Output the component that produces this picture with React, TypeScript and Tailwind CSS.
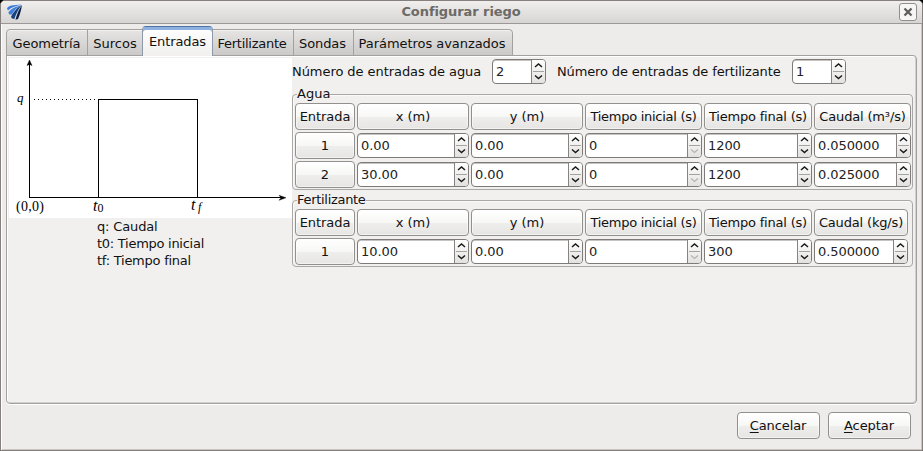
import React from "react";

function Spin({ value, className = "", downOff = false }: { value: string; className?: string; downOff?: boolean }) {
  return (
    <div className={`flex h-[25px] overflow-hidden rounded-[4px] border border-[#7d7a78] bg-white shadow-[inset_0_1px_0_#c6c4c2] ${className}`}>
      <div className="min-w-0 flex-1 pl-[3px] leading-[24px] tracking-[-0.08px] text-[#222]">{value}</div>
      <div className="h-full w-[14px] shrink-0 border-l border-[#868381] bg-gradient-to-b from-white to-[#e2e1df]">
        <svg width="13" height="23" viewBox="0 0 13 23" fill="none">
          <path d="M1 11.5H12" stroke="#a5a3a1" />
          <path d="M3 7L6.500 4L10 7" stroke="#1a1a1a" strokeWidth="1.5" />
          <path d="M3 15.500L6.500 18.500L10 15.500" stroke={downOff ? "#b5b3b1" : "#1a1a1a"} strokeWidth={downOff ? 1.2 : 1.5} />
        </svg>
      </div>
    </div>
  );
}

function Button({ children, className = "" }: { children: React.ReactNode; className?: string }) {
  return (
    <div className={`h-[27px] rounded-[4px] border border-[#91908c] bg-linear-[180deg,#ffffff,#f7f7f6_50%,#eeeeed_51%,#e6e5e4] text-center leading-[25px] whitespace-nowrap shadow-[inset_0_0_0_1px_#ffffff80] ${className}`}>
      {children}
    </div>
  );
}

const headings = [
  { label: "Entrada", tracking: "tracking-[-0.05px]" },
  { label: "x (m)", tracking: "" },
  { label: "y (m)", tracking: "" },
  { label: "Tiempo inicial (s)", tracking: "tracking-[-0.27px]" },
  { label: "Tiempo final (s)", tracking: "tracking-[-0.2px]" },
];

function Group({ title, titleClass, unit, rows, top, columns }: { title: string; titleClass: string; unit: string; rows: string[][]; top: string; columns: string }) {
  return (
    <div className={`relative w-[621px] rounded-[4px] border border-[#aaa8a6] pt-[8px] pb-px pl-[2px] shadow-[inset_1px_1px_0_#fafafa] ${top}`}>
      <span className={`absolute -top-[10px] left-[4px] bg-[#f1f0ef] leading-[17px] ${titleClass}`}>{title}</span>
      <div className={`grid items-center gap-[2px] ${columns}`}>
        {headings.map(({ label, tracking }) => (
          <Button key={label} className={tracking}>{label}</Button>
        ))}
        <Button className="tracking-[-0.16px]">{`Caudal (${unit})`}</Button>
        {rows.map((row, i) => (
          <React.Fragment key={i}>
            <Button>{i + 1}</Button>
            {row.map((v, j) => (
              <Spin key={j} value={v} downOff={j === 2} />
            ))}
          </React.Fragment>
        ))}
      </div>
    </div>
  );
}

const tabs = [
  { label: "Geometría", width: "w-[82px] pr-px tracking-[-0.1px]" },
  { label: "Surcos", width: "w-[56px]" },
  { label: "Entradas", width: "w-[71px] tracking-[-0.1px]" },
  { label: "Fertilizante", width: "w-[82px] pr-[2px] tracking-[-0.27px]" },
  { label: "Sondas", width: "w-[61px] pr-[2px] tracking-[-0.1px]" },
  { label: "Parámetros avanzados", width: "w-[160px] pr-[2px] tracking-[-0.05px]" },
];

function Diagram() {
  return (
    <svg width="283" height="160" viewBox="9 58 283 160" className="block bg-white" fill="none">
      <g stroke="#000" shapeRendering="crispEdges">
        <path d="M29.5 62V197.5H284" />
        <path d="M98.5 197V99.5H197.5V197" />
        <path d="M34 99.5H98" strokeDasharray="1 3" />
      </g>
      <path d="M29.5 60L32 65.5L29.5 64.5L27 65.5Z M286 197.8L279 200.3L281 197.8L279 195.3Z" fill="#000" stroke="#000" strokeWidth=".4" />
      <g fill="#000" fontFamily="Liberation Serif, serif">
        <text x="17" y="102" fontSize="13" fontStyle="italic">q</text>
        <text x="16" y="211" fontSize="14" textLength="28">(0,0)</text>
        <text x="93" y="211" fontSize="16" fontStyle="italic">t</text>
        <text x="97.500" y="212" fontSize="12">0</text>
        <text x="191" y="210" fontSize="16" fontStyle="italic">t</text>
        <text x="198" y="211" fontSize="12" fontStyle="italic">f</text>
      </g>
    </svg>
  );
}

export default function App() {
  return (
    <div className="h-[451px] w-[923px] overflow-hidden bg-black font-['DejaVu_Sans',sans-serif] text-[13px] text-[#111]">
      <div className="flex h-[451px] flex-col rounded-t-[5px] border border-[#85807d] bg-[#edeceb] shadow-[inset_1px_1px_0_#fff,inset_-1px_-1px_0_#c9c5c2]">
        <div className="flex h-[23px] shrink-0 items-center rounded-t-[4px] border-b border-[#9b9895] bg-gradient-to-b from-[#f0efee] to-[#d7d5d3]">
          <svg width="16" height="17" viewBox="0 0 16 17" className="ml-[6px] shrink-0">
            <path d="M0 4.500C1 1.500 6 1 15 .5C9 2 5 3 1 6.500Z" fill="#3b7ce0" />
            <path d="M1.300 8.500C4 5 8 2.800 14.500 1C9.500 4 6.500 7 4.800 10.500L2.300 10.500Z" fill="#3f7edc" />
            <path d="M4 13C6 8.500 9 4.500 14.800 1C11.500 4.500 9 10 7.300 15L5 14.500Z" fill="#17417f" />
            <path d="M8.500 15.800C10 10 12 5 15 1C14.500 5 12.800 11 11 15Z" fill="#0a1f47" />
          </svg>
          <div className="flex-1 text-center font-bold tracking-[-0.08px] text-[#6c6a67]">Configurar riego</div>
          <div className="mr-[5px] flex size-[18px] items-center justify-center rounded-[3px] border border-[#918e8b] bg-[#f7f6f5]">
            <svg width="10" height="10" viewBox="0 0 10 10">
              <path d="M1.500 1.500L8.500 8.500M8.500 1.500L1.500 8.500" stroke="#5f5c5a" strokeWidth="2.3" />
            </svg>
          </div>
        </div>

        <div className="relative z-10 ml-[5px] flex h-[32px] shrink-0 items-end">
          {tabs.map(({ label, width }, i) =>
            i === 2 ? (
              <div key={label} className={`relative z-10 -mr-px h-[30px] rounded-t-[4px] border-x border-t border-x-[#8d98aa] border-t-[#4d72a6] bg-gradient-to-b from-white to-[#f1f0ef] text-center leading-[30px] shadow-[inset_0_3px_0_#8fb1e0] ${width}`}>
                {label}
              </div>
            ) : (
              <div key={label} className={`-mr-px h-[27px] border border-[#a3a09e] bg-gradient-to-b from-[#e6e5e4] to-[#cccac8] text-center leading-[27px] whitespace-nowrap shadow-[inset_0_1px_0_#f4f3f2] ${i === 0 ? "rounded-tl-[4px]" : ""} ${i === 5 ? "rounded-tr-[4px]" : ""} ${width}`}>
                {label}
              </div>
            )
          )}
        </div>

        <div className="-mt-px ml-[5px] flex h-[349px] w-[911px] shrink-0 rounded-b-[4px] rounded-tr-[4px] border border-[#a3a09e] bg-[#f1f0ef] shadow-[inset_1px_1px_0_#fff,inset_-1px_-1px_0_#d2d0ce,0_1px_0_#fff]">
          <div className="ml-[2px] w-[283px] pt-[2px]">
            <Diagram />
            <div className="pl-[88px] leading-[17px]">
              <p className="tracking-[-0.15px]">q: Caudal</p>
              <p className="tracking-[-0.27px]">t0: Tiempo inicial</p>
              <p className="tracking-[-0.25px]">tf: Tiempo final</p>
            </div>
          </div>
          <div className="w-[621px] pt-[3px]">
            <div className="flex h-[25px] items-center whitespace-nowrap">
              <span className="w-[200px] tracking-[-0.06px]">Número de entradas de agua</span>
              <Spin value="2" className="w-[54px]" />
              <span className="ml-[11px] w-[235px] tracking-[-0.14px]">Número de entradas de fertilizante</span>
              <Spin value="1" className="w-[54px]" />
            </div>
            <Group
              title="Agua"
              titleClass=""
              unit="m³/s"
              top="mt-[10px]"
              columns="grid-cols-[60px_112px_112px_117px_108px_97px]"
              rows={[
                ["0.00", "0.00", "0", "1200", "0.050000"],
                ["30.00", "0.00", "0", "1200", "0.025000"],
              ]}
            />
            <Group
              title="Fertilizante"
              titleClass="tracking-[-0.3px]"
              unit="kg/s"
              top="mt-[10px]"
              columns="grid-cols-[60px_112px_112px_117px_108px_94px]"
              rows={[["10.00", "0.00", "0", "300", "0.500000"]]}
            />
          </div>
        </div>

        <div className="mt-[8px] mr-[11px] flex justify-end gap-[8px]">
          <Button className="w-[83px] pr-px tracking-[-0.1px]"><span className="underline underline-offset-2">C</span>ancelar</Button>
          <Button className="w-[83px] pr-px tracking-[-0.05px]"><span className="underline underline-offset-2">A</span>ceptar</Button>
        </div>
      </div>
    </div>
  );
}
